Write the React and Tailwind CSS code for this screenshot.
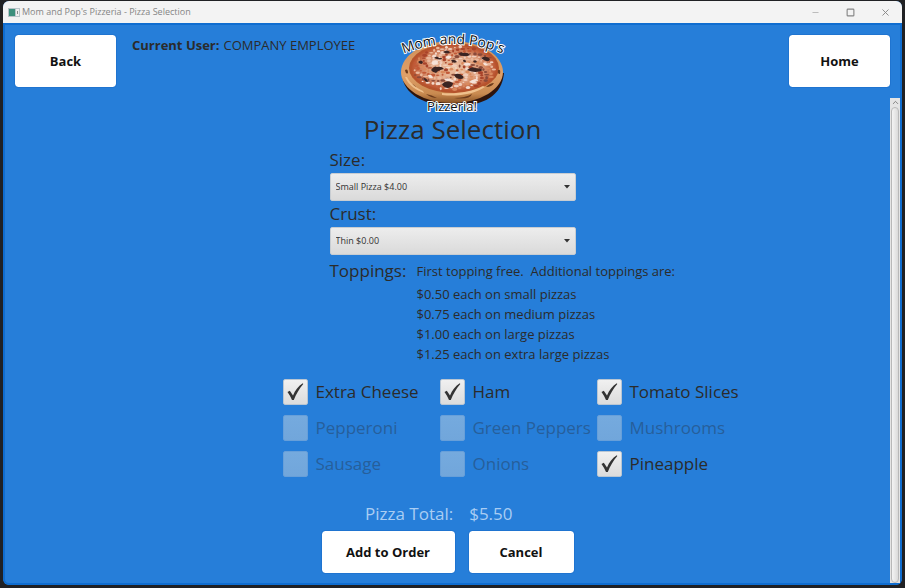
import { useState } from "react";
import { Minus, Square, X, ChevronUp } from "lucide-react";

const TOPPINGS = [
  "Extra Cheese", "Ham", "Tomato Slices",
  "Pepperoni", "Green Peppers", "Mushrooms",
  "Sausage", "Onions", "Pineapple",
];
const MAX_TOPPINGS = 4;

const PRICES = [
  "$0.50 each on small pizzas",
  "$0.75 each on medium pizzas",
  "$1.00 each on large pizzas",
  "$1.25 each on extra large pizzas",
];

// Small irregular flecks of sauce, cheese and char spread evenly over the pizza's face.
const FLECK_COLORS = ["#f3d9cc", "#c25a38", "#e9b79b", "#a8432a", "#f0cdbb", "#8a4a3a", "#d98a5e"];
const FLECKS = Array.from({ length: 210 }, (_, i) => {
  const r = Math.sqrt((i + 0.5) / 210);
  const a = i * 2.39996;
  return {
    cx: 57 + 41 * r * Math.cos(a),
    cy: 41 + 22 * r * Math.sin(a),
    rx: 1 + ((i * 7) % 5) * 0.4,
    ry: 0.7 + ((i * 3) % 4) * 0.3,
    fill: FLECK_COLORS[(i * 5 + ((i * i) % 3)) % 7],
  };
});

function Logo() {
  return (
    <svg viewBox="0 0 112 90" className="-mb-5 h-[90px] w-28" role="img" aria-label="Mom and Pop's Pizzeria!">
      <defs>
        <linearGradient id="crust" x1="0" y1="0" x2="0" y2="1">
          <stop offset="0" stopColor="#d08f58" />
          <stop offset="0.55" stopColor="#dfa068" />
          <stop offset="0.85" stopColor="#c98a50" />
          <stop offset="1" stopColor="#8a5426" />
        </linearGradient>
        <radialGradient id="cheese">
          <stop offset="0" stopColor="#ecc4a4" />
          <stop offset="0.65" stopColor="#dc9a78" />
          <stop offset="1" stopColor="#b8502c" />
        </radialGradient>
        <path id="arc" d="M3 28Q56 6 109 28" />
      </defs>
      <path d="M5 47C6 68 28 79 58 79C88 79 105 68 107 46Z" fill="#2e140c" />
      <ellipse cx="55" cy="45" rx="51" ry="31" fill="url(#crust)" />
      <ellipse cx="57" cy="41" rx="45" ry="25" fill="#b5532c" />
      <ellipse cx="57" cy="41" rx="43" ry="23" fill="url(#cheese)" />
      {FLECKS.map((f, i) => <ellipse key={i} {...f} />)}
      <g fill="#f6e2d8">
        <path d="M34 36q4-4 7-2q0 4-5 4zM48 30q4-3 7 0q-3 4-7 0zM66 37q5-3 8 0q-4 4-8 0zM47 52q5-2 8 1q-5 3-8-1zM72 55q5-4 8-2q-3 5-8 2zM31 48q4-1 5 3q-4 1-5-3zM86 36q3-1 5 2q-4 2-5-2z" />
      </g>
      <g fill="#3b2422">
        <path d="M21 35q3-3 5 0q-1 4-5 0zM37 31q3-3 5 0l3 0q0 3-8 0zM46 25q4-3 7 0q-2 3-7 0zM61 27q3-3 5-1q5-1 7 2q-6 3-12-1zM84 31q5-3 9 1q-1 5-9-1zM70 43q5-4 8-2q5 0 8 2q-7 4-16 0zM34 43q3-5 6-3q5-1 7 2q-6 1-8 4q-4-1-5-3zM45 57q5-5 11-1q0 4-5 5q-5-1-6-4zM57 48q4-3 9 1q2 3-3 3q-4 0-6-4zM54 33q4-1 6 2q-4 2-6-2zM27 51q3 0 4 4q-4 0-4-4zM76 34q3-2 4 1q-3 2-4-1zM66 33q3-1 3 2q-3 1-3-2z" />
      </g>
      <g fill="#6b3a1c">
        <path d="M8 43q3-2 3 3q-2 2-3-3zM14 57q3 0 5 3q-3 1-5-3zM29 67q6 1 11 4q-6 0-11-4zM57 71q11 0 18-4q-2 6-18 4zM89 60q4-4 8-4q-2 4-8 4zM101 43q3-1 2 4q-3 0-2-4z" />
      </g>
      <path d="M8 50c4 9 11 13 19 16l-1-2c-8-4-13-8-16-14zM45 68c16 2 32-1 43-8l-2-1c-12 6-26 8-41 7z" fill="#efc08c" />
      <g fontFamily="'Open Sans', 'Noto Sans', sans-serif" fontSize="14" fill="#111" stroke="#fff" strokeWidth="2" paintOrder="stroke" textAnchor="middle">
        <text><textPath href="#arc" startOffset="50%">Mom and Pop's</textPath></text>
        <text x="55" y="84" fontSize="13">Pizzeria!</text>
      </g>
    </svg>
  );
}

function Action({ children, className }) {
  return (
    <button type="button" className={`rounded-[3px] bg-white text-[13px] leading-5 font-bold text-[#111] outline-1 outline-[#1f74d0] ${className}`}>
      {children}
    </button>
  );
}

function Picker({ id, label, options }) {
  return (
    <div>
      <label htmlFor={id} className="block text-[17px] leading-[26px]">{label}</label>
      <div className="grid items-center">
        <select id={id} className="col-start-1 row-start-1 h-7 appearance-none rounded-xs border border-[#c8cdd2] bg-linear-to-b from-[#ededed] to-[#dadada] px-[5px] text-[9px] text-[#333]">
          {options.map((o) => <option key={o}>{o}</option>)}
        </select>
        <svg viewBox="0 0 6 4" className="pointer-events-none col-start-1 row-start-1 mr-[6px] h-1 w-1.5 justify-self-end" aria-hidden="true">
          <path d="M0 0h6L3 3.5z" fill="#333" />
        </svg>
      </div>
    </div>
  );
}

function Topping({ name, checked, disabled, onChange }) {
  return (
    <label className={`flex items-center gap-2 text-[17px] leading-[26px] whitespace-nowrap ${disabled ? "text-[#265f9b]" : ""}`}>
      <span className="grid h-[26px] w-[25px] shrink-0 place-items-center">
        <input
          type="checkbox"
          checked={checked}
          disabled={disabled}
          onChange={onChange}
          className="col-start-1 row-start-1 size-full appearance-none rounded-xs border border-[#b9c6d3] bg-linear-to-b from-[#f0f0f0] to-[#dcdcdc] disabled:border-[#679fd9] disabled:from-[#75aade] disabled:to-[#71a6db]"
        />
        {checked && (
          <svg viewBox="0 0 17 18" className="pointer-events-none col-start-1 row-start-1 h-[18px] w-[17px]" aria-hidden="true">
            <path d="M0.5 9L2.8 7.8L6 12.6C8 7.5 11.5 2.8 15.8 0.3L16.3 1C12.4 5.5 9.2 11 6.8 17H5C3.8 14 2.2 11.4 0.5 9Z" fill="#333" />
          </svg>
        )}
      </span>
      {name}
    </label>
  );
}

export default function App() {
  const [picked, setPicked] = useState(["Extra Cheese", "Ham", "Tomato Slices", "Pineapple"]);
  const toggle = (name) =>
    setPicked((p) => (p.includes(name) ? p.filter((n) => n !== name) : [...p, name]));

  return (
    <div className="flex h-screen flex-col bg-[#202124] px-[3px] pt-px pb-[3px] font-['Open_Sans','Noto_Sans',sans-serif] text-[#2b2b2b]">
      <div className="flex min-h-0 flex-1 flex-col overflow-hidden rounded-md bg-[#267ed9]">
        <div className="flex h-[22px] shrink-0 items-center gap-0.5 bg-[#f3f3f3] pl-[5px] text-[9px] text-[#858585]">
          <svg viewBox="0 0 12 9" className="h-[9px] w-3" aria-hidden="true">
            <rect width="12" height="9" fill="#b9c4c9" />
            <rect x="1" y="1" width="6" height="7" fill="#3c8f7c" />
            <rect x="8" y="1" width="3" height="7" fill="#eee" />
            <rect x="9" y="3" width="1" height="3" fill="#888" />
          </svg>
          <h1 className="flex-1">Mom and Pop's Pizzeria - Pizza Selection</h1>
          <div className="flex">
            <button type="button" aria-label="Minimize" className="grid w-[35px] place-items-center"><Minus size={9} strokeWidth={2} color="#aaa" /></button>
            <button type="button" aria-label="Maximize" className="grid w-[35px] place-items-center"><Square size={9} strokeWidth={3} /></button>
            <button type="button" aria-label="Close" className="grid w-[34px] place-items-center"><X size={11} strokeWidth={2} /></button>
          </div>
        </div>

        <div className="flex min-h-0 flex-1 flex-col rounded-b-md border-2 border-[#0f6dd0]">
          <header className="grid h-[73px] shrink-0 grid-cols-[1fr_auto_1fr] items-start px-2.5">
            <div className="flex gap-4 pt-2.5">
              <Action className="h-[52px] w-[101px]">Back</Action>
              <p className="flex gap-1 text-[13px] leading-5"><strong>Current User:</strong> COMPANY EMPLOYEE</p>
            </div>
            <div className="pt-0.5"><Logo /></div>
            <div className="flex justify-end pt-2.5">
              <Action className="h-[52px] w-[101px]">Home</Action>
            </div>
          </header>

          <div className="flex min-h-0 flex-1">
            <main className="flex min-w-0 flex-1 flex-col items-center pt-3.5 pl-2.5">
              <h2 className="text-[26px] leading-[35px]">Pizza Selection</h2>
              <div className="w-[340px]">
                <form className="px-[47px]">
                  <div className="flex flex-col">
                    <Picker id="size" label="Size:" options={["Small Pizza $4.00", "Medium Pizza", "Large Pizza", "Extra Large Pizza"]} />
                    <Picker id="crust" label="Crust:" options={["Thin $0.00", "Regular", "Pan"]} />
                  </div>
                  <div className="flex whitespace-nowrap pt-1">
                    <span className="w-[87px] shrink-0 text-[17px] leading-6">Toppings:</span>
                    <div className="text-[13px] leading-5">
                      <p className="pt-0.5 pb-[3px] whitespace-pre">First topping free.  Additional toppings are:</p>
                      {PRICES.map((p) => <p key={p}>{p}</p>)}
                    </div>
                  </div>
                </form>
                <fieldset className="grid grid-cols-[157px_157px_max-content] gap-y-2.5 pt-[15px]">
                  {TOPPINGS.map((name) => {
                    const checked = picked.includes(name);
                    return (
                      <Topping key={name} name={name} checked={checked} disabled={!checked && picked.length >= MAX_TOPPINGS} onChange={() => toggle(name)} />
                    );
                  })}
                </fieldset>
              </div>
              <p className="flex w-[175px] gap-4 pt-6 text-[17px] leading-[26px] whitespace-nowrap text-[#a9cdf3]">
                <span>Pizza Total:</span>
                <output>$5.50</output>
              </p>
              <div className="flex gap-3.5 pt-1 pr-2.5">
                <Action className="h-[42px] w-[133px]">Add to Order</Action>
                <Action className="h-[42px] w-[105px]">Cancel</Action>
              </div>
            </main>
            <div className="flex w-2.5 shrink-0 flex-col bg-[#e4e4e4]" aria-hidden="true">
              <ChevronUp size={9} className="self-center" color="#666" />
              <div className="mx-px flex-1 rounded-sm border border-[#b8b8b8] bg-linear-to-r from-[#f4f4f4] to-[#dadada]" />
            </div>
          </div>
        </div>
      </div>
    </div>
  );
}
